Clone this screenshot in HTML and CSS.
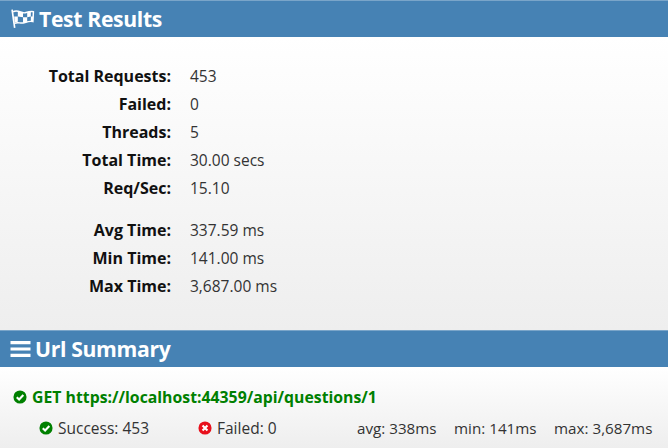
FILE: index.html
```html
<!DOCTYPE html>
<html lang="en">
<head>
    <meta charset="UTF-8">
    <title>Test Results</title>
    <link rel="stylesheet" href="styles.css">
</head>
<body>

<h2 class="section-title">
    <svg class="title-icon flag" viewBox="0 0 24 20">
        <path fill="none" stroke="#fff" stroke-width="1.600" d="M2 1.500 L4.500 19"/>
        <path fill="none" stroke="#fff" stroke-width="1.400" d="M3 3.500 C8 1 11 5.500 14.500 4.500 C17 3.800 20 3 22.500 3.500 L22 13 C18 12 15.500 13.800 12.500 14.300 C9.500 14.800 7 13 4.300 14.800"/>
        <path fill="#fff" d="M7.500 3 L12.500 4.500 L12.500 8.800 L7.500 8 Z M16.500 4 L20 3.300 L20 8 L16.500 8.800 Z M4 8 L7.500 8 L7.500 13 L4.500 13.800 Z M12.500 8.800 L16.500 8.800 L16.500 13.200 L12.500 14 Z M20 8 L22.300 8 L22 12.800 L20 12.400 Z"/>
    </svg>
    Test Results
</h2>

<div class="results">
    <div class="stats">
        <div class="label">Total Requests:</div><div>453</div>
        <div class="label">Failed:</div><div>0</div>
        <div class="label">Threads:</div><div>5</div>
        <div class="label">Total Time:</div><div>30.00 secs</div>
        <div class="label">Req/Sec:</div><div>15.10</div>
    </div>
    <div class="stats">
        <div class="label">Avg Time:</div><div>337.59 ms</div>
        <div class="label">Min Time:</div><div>141.00 ms</div>
        <div class="label">Max Time:</div><div>3,687.00 ms</div>
    </div>
</div>

<h2 class="section-title">
    <svg class="title-icon bars" viewBox="0 0 20 18">
        <path fill="#fff" d="M0 1h20v3.200H0zM0 7.400h20v3.200H0zM0 13.800h20v3.200H0z"/>
    </svg>
    Url Summary
</h2>

<div class="summary">
    <div class="url">
        <svg class="status-icon" viewBox="0 0 16 16">
            <circle cx="8" cy="8" r="7.500" fill="#008000"/>
            <path fill="none" stroke="#fff" stroke-width="2.400" d="M4.300 8.200 L7 10.800 L11.800 5.700"/>
        </svg>
        GET https://localhost:44359/api/questions/1
    </div>
    <div class="url-stats">
        <span class="stat success">
            <svg class="status-icon" viewBox="0 0 16 16">
                <circle cx="8" cy="8" r="7.500" fill="#008000"/>
                <path fill="none" stroke="#fff" stroke-width="2.400" d="M4.300 8.200 L7 10.800 L11.800 5.700"/>
            </svg>
            Success: 453
        </span>
        <span class="stat failed">
            <svg class="status-icon" viewBox="0 0 16 16">
                <circle cx="8" cy="8" r="7.500" fill="#e8101c"/>
                <path fill="none" stroke="#fff" stroke-width="2.400" d="M5.200 5.200 L10.800 10.800 M10.800 5.200 L5.200 10.800"/>
            </svg>
            Failed: 0
        </span>
        <span class="timings">
            <span>avg: 338ms</span>
            <span>min: 141ms</span>
            <span>max: 3,687ms</span>
        </span>
    </div>
</div>

</body>
</html>
```

FILE: styles.css
```css
html, body {
    height: 100%;
}

body {
    margin: 0;
    overflow: hidden;
    background-color: #eee;
    color: #333;
    font-family: "Open Sans", "Noto Sans", Arial, sans-serif;
    font-size: 15.5px;
}

.section-title {
    display: flex;
    align-items: center;
    height: 35px;
    margin: 0;
    padding-left: 10px;
    padding-bottom: 1px;
    background-color: #4682b4;
    border-top: 1px solid #7aa5c9;
    color: #fff;
    font-size: 21.2px;
    font-weight: 700;
    letter-spacing: -0.35px;
}

.title-icon {
    margin-right: 4px;
}

.title-icon.flag {
    width: 25px;
    height: 21px;
}

.title-icon.bars {
    width: 21px;
    height: 18px;
}

/* test results block */
.results {
    height: 293px;
    box-sizing: border-box;
    padding-top: 25px;
    background: linear-gradient(#fff, #eee);
}

.stats {
    display: grid;
    grid-template-columns: 171px 1fr;
    column-gap: 19px;
    grid-auto-rows: 28px;
    align-items: center;
    margin-bottom: 14px;
}

.label {
    text-align: right;
    color: #111;
    font-size: 16px;
    font-weight: 700;
}

/* url summary block */
.summary {
    height: 81px;
    box-sizing: border-box;
    padding: 19px 0 0 13px;
    background: linear-gradient(#fff, #eee);
}

.url {
    display: flex;
    align-items: center;
    gap: 5px;
    color: #008000;
    font-size: 15.8px;
    font-weight: 700;
}

.url-stats {
    display: flex;
    align-items: center;
    margin-top: 9px;
    padding-left: 26px;
}

.stat {
    display: flex;
    align-items: center;
    gap: 5px;
}

.stat.success {
    width: 159px;
}

.stat.failed {
    width: 159px;
}

.timings {
    display: flex;
    gap: 17.5px;
    font-size: 15.2px;
}

.status-icon {
    width: 14px;
    height: 14px;
}
```
